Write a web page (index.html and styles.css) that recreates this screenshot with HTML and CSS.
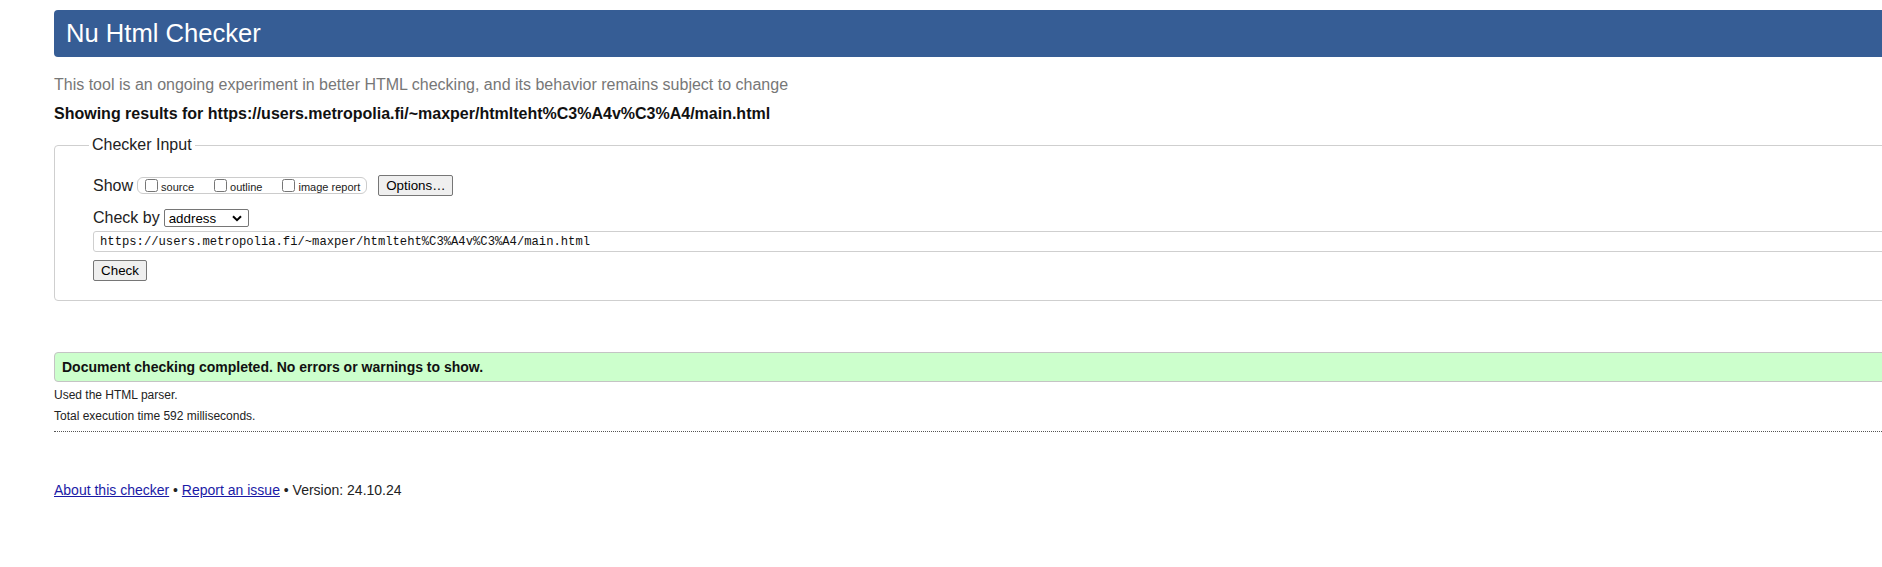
FILE: index.html
```html
<!DOCTYPE html>
<html lang="en">
<head>
<meta charset="utf-8">
<title>Nu Html Checker</title>
<link rel="stylesheet" href="styles.css">
</head>
<body>
<div class="page">
  <h1 class="title">Nu Html Checker</h1>
  <p class="intro">This tool is an ongoing experiment in better HTML checking, and its behavior remains subject to change</p>
  <p class="showing">Showing results for https://users.metropolia.fi/~maxper/htmlteht%C3%A4v%C3%A4/main.html</p>
  <fieldset class="checker">
    <legend class="legend">Checker Input</legend>
    <div class="row row-show">
      <span class="label">Show</span>
      <span class="opts">
        <label class="opt"><input type="checkbox" class="cb"><span>source</span></label>
        <label class="opt"><input type="checkbox" class="cb"><span>outline</span></label>
        <label class="opt"><input type="checkbox" class="cb"><span>image report</span></label>
      </span>
      <button class="btn btn-options" type="button">Options…</button>
    </div>
    <div class="row row-by">
      <span class="label">Check by</span>
      <span class="select"><span class="select-text">address</span><svg class="chev" width="10" height="7" viewBox="0 0 10 7"><path d="M1 1.2 L5 5.2 L9 1.2" fill="none" stroke="#000" stroke-width="2"/></svg></span>
    </div>
    <input class="url" type="text" value="https://users.metropolia.fi/~maxper/htmlteht%C3%A4v%C3%A4/main.html">
    <div class="row-check"><button class="btn btn-check" type="button">Check</button></div>
  </fieldset>
  <div class="success">Document checking completed. No errors or warnings to show.</div>
  <p class="meta meta-first">Used the HTML parser.</p>
  <p class="meta meta-second">Total execution time 592 milliseconds.</p>
  <hr class="sep">
  <p class="footer"><a href="#" class="flink">About this checker</a> • <a href="#" class="flink">Report an issue</a> • Version: 24.10.24</p>
</div>
</body>
</html>
```

FILE: styles.css
```css
html, body {
  margin: 0;
  padding: 0;
  overflow: hidden;
  background: #fff;
}
body {
  font-family: "Liberation Sans", Arial, sans-serif;
  color: #000;
}
.page {
  width: 2000px;
  margin: 10px 0 0 54px;
  padding-top: 0;
}
.title {
  margin: 0;
  height: 47px;
  line-height: 47px;
  padding: 0 12px;
  background: #365d95;
  color: #fff;
  font-weight: normal;
  font-size: 25.6px;
  border-radius: 4px;
}
.intro {
  margin: 19px 0 0;
  font-size: 16px;
  line-height: 18px;
  color: #777;
}
.showing {
  margin: 11px 0 0;
  font-size: 16px;
  line-height: 18px;
  font-weight: bold;
  color: #111;
}
.checker {
  margin: 13px 0 0;
  padding: 0 0 19px 38px;
  border: 1px solid #cfcfcf;
  border-radius: 4px;
  min-width: 0;
}
.legend {
  margin-left: -4px;
  padding: 0 3px;
  font-size: 16px;
  line-height: 18px;
  color: #222;
}
.row {
  display: flex;
  align-items: center;
  font-size: 16px;
  color: #222;
}
.row-show {
  margin-top: 21px;
  height: 21px;
}
.row-by {
  margin-top: 11px;
  height: 22px;
}
.label {
  margin-right: 4px;
}
.opts {
  display: inline-flex;
  align-items: center;
  height: 15px;
  padding: 0 6px 0 7px;
  border: 1px solid #cccccc;
  border-radius: 6px;
  font-size: 11px;
  color: #222;
}
.opt {
  display: inline-flex;
  align-items: center;
  margin-right: 20px;
}
.opt:last-child {
  margin-right: 0;
}
.cb {
  width: 13px;
  height: 13px;
  margin: 0 3px 0 0;
}
.opt span {
  position: relative;
  top: 1px;
}
.btn {
  font-family: "Liberation Sans", Arial, sans-serif;
  font-size: 13.33px;
  height: 21px;
  padding: 0 7px;
  background: #efefef;
  color: #000;
  border: 1px solid #767676;
  border-radius: 2px;
}
.btn-options {
  margin-left: 11px;
  width: 75px;
}
.btn-check {
  width: 54px;
}
.select {
  display: inline-flex;
  align-items: center;
  justify-content: space-between;
  box-sizing: border-box;
  width: 85px;
  height: 18px;
  padding: 0 6px 0 4px;
  border: 1px solid #767676;
  border-radius: 2px;
  font-size: 13.33px;
  color: #000;
  background: #fff;
}
.chev {
  display: block;
}
.url {
  display: block;
  box-sizing: border-box;
  width: 1940px;
  height: 21px;
  margin: 2px 0 0;
  padding: 0 6px;
  border: 1px solid #cfcfcf;
  border-radius: 3px;
  font-family: "Liberation Mono", "Courier New", monospace;
  font-size: 12.2px;
  color: #111;
  background: #fff;
}
.row-check {
  margin-top: 8px;
  display: flex;
}
.success {
  margin-top: 51px;
  box-sizing: border-box;
  height: 30px;
  line-height: 28px;
  padding: 0 7px;
  background: #ccffcc;
  border: 1px solid #c4c4c4;
  border-radius: 4px;
  font-size: 14px;
  font-weight: bold;
  color: #111;
}
.meta {
  margin: 0;
  font-size: 12px;
  line-height: 14px;
  color: #222;
}
.meta-first {
  margin-top: 6px;
}
.meta-second {
  margin-top: 7px;
}
.sep {
  margin: 8px 0 0;
  height: 0;
  border: 0;
  border-top: 1px dotted #555;
}
.footer {
  margin: 50px 0 0;
  font-size: 14px;
  line-height: 16px;
  color: #222;
}
.flink {
  color: #1a1aa6;
  text-decoration: underline;
}
```
